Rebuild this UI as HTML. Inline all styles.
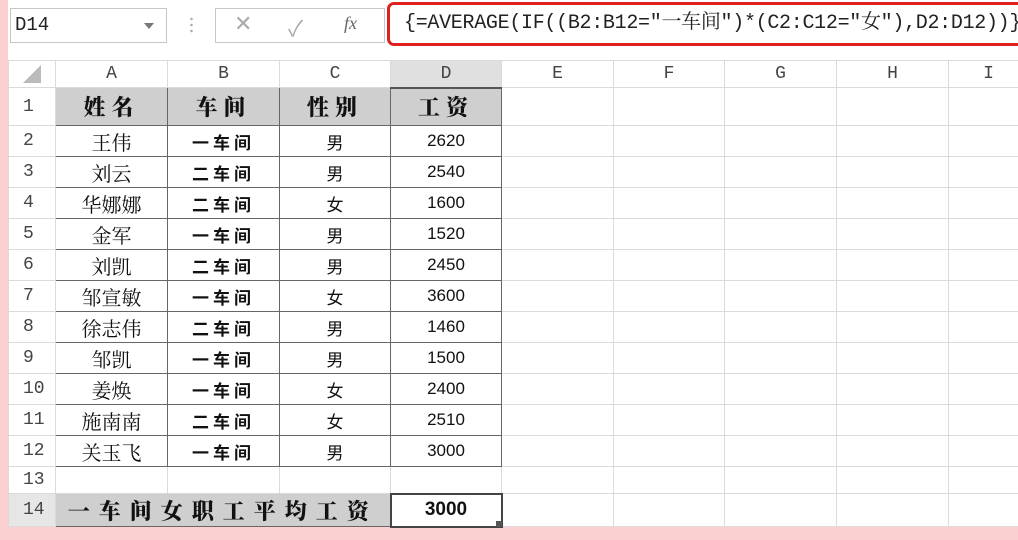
<!DOCTYPE html>
<html><head><meta charset="utf-8"><style>
body{margin:0;width:1018px;height:540px;overflow:hidden;background:#fbd0d0;position:relative;font-family:"Liberation Sans","Noto Sans CJK SC",sans-serif}
#sheet{position:absolute;left:8px;top:0;width:1010px;height:527px;background:#fff}
.nb{position:absolute;left:10px;top:8px;width:157px;height:35px;border:1px solid #c6c6c6;background:#fff;box-sizing:border-box;font:19px "Liberation Mono","Noto Sans CJK SC",monospace;line-height:33px;padding-left:4px;color:#222}
.nb:after{content:"";position:absolute;right:12px;top:14px;border:5px solid transparent;border-top:6px solid #777}
.dots{position:absolute;left:190px;top:16px;width:3px;height:18px;background:radial-gradient(circle,#aaa 1px,transparent 1.5px) 0 0/3px 6px}
.btns{position:absolute;left:215px;top:8px;width:170px;height:35px;border:1px solid #c6c6c6;box-sizing:border-box;color:#aaa;font-size:22px}
.red{position:absolute;left:387px;top:2px;width:640px;height:44px;border:3px solid #e02020;border-radius:7px;box-sizing:border-box;background:#fff;font:20px "Liberation Mono","Noto Serif CJK SC",monospace;line-height:38px;padding-left:14px;white-space:nowrap;color:#222;overflow:hidden;letter-spacing:-0.3px}
table{position:absolute;left:8px;top:60px;border-collapse:collapse;table-layout:fixed;width:1020px}
td{border:1px solid #dadada;padding:0;text-align:center;font-size:17px;color:#111;white-space:nowrap;overflow:hidden}
td.h{background:#fff;font:18px "Liberation Mono","Noto Serif CJK SC",monospace;color:#444}
td.r{text-align:left;padding-left:14px;font:18px "Liberation Mono",monospace;color:#444}
.d{border:1px solid #666}
.g{background:#cfcfcf;font-family:"Noto Serif CJK SC",serif;font-weight:900;font-size:22px;letter-spacing:6px}
.n{font-family:"Noto Serif CJK SC",serif;font-size:20px}
.w{font-family:"Noto Sans CJK SC",sans-serif;font-weight:700;font-size:17px;letter-spacing:4px}
</style></head><body>
<div id="sheet"></div>
<div class="nb">D14</div>
<div class="dots"></div>
<div class="btns"><span style="position:absolute;left:18px;top:2px">✕</span><span style="position:absolute;left:72px;top:2px">✓</span><span style="position:absolute;left:128px;top:4px;font:italic 18px 'Liberation Serif',serif;color:#666">fx</span></div>
<div class="red">{=AVERAGE(IF((B2:B12="一车间")*(C2:C12="女"),D2:D12))}</div>
<table>
<colgroup><col style="width:47px"><col style="width:112px"><col style="width:112px"><col style="width:111px"><col style="width:111px"><col style="width:112px"><col style="width:111px"><col style="width:112px"><col style="width:112px"><col style="width:80px"></colgroup>
<tr style="height:26px"><td class="h" style="color:#bbb">◢</td><td class="h">A</td><td class="h">B</td><td class="h">C</td><td class="h" style="background:#e0e0e0;border-bottom:2px solid #555">D</td><td class="h">E</td><td class="h">F</td><td class="h">G</td><td class="h">H</td><td class="h">I</td></tr>
<tr style="height:38px"><td class="r">1</td><td class="d g">姓名</td><td class="d g">车间</td><td class="d g">性别</td><td class="d g">工资</td><td></td><td></td><td></td><td></td><td></td></tr>
<tr style="height:31px"><td class="r">2</td><td class="d n">王伟</td><td class="d w">一车间</td><td class="d">男</td><td class="d">2620</td><td></td><td></td><td></td><td></td><td></td></tr>
<tr style="height:31px"><td class="r">3</td><td class="d n">刘云</td><td class="d w">二车间</td><td class="d">男</td><td class="d">2540</td><td></td><td></td><td></td><td></td><td></td></tr>
<tr style="height:31px"><td class="r">4</td><td class="d n">华娜娜</td><td class="d w">二车间</td><td class="d">女</td><td class="d">1600</td><td></td><td></td><td></td><td></td><td></td></tr>
<tr style="height:31px"><td class="r">5</td><td class="d n">金军</td><td class="d w">一车间</td><td class="d">男</td><td class="d">1520</td><td></td><td></td><td></td><td></td><td></td></tr>
<tr style="height:31px"><td class="r">6</td><td class="d n">刘凯</td><td class="d w">二车间</td><td class="d">男</td><td class="d">2450</td><td></td><td></td><td></td><td></td><td></td></tr>
<tr style="height:31px"><td class="r">7</td><td class="d n">邹宣敏</td><td class="d w">一车间</td><td class="d">女</td><td class="d">3600</td><td></td><td></td><td></td><td></td><td></td></tr>
<tr style="height:31px"><td class="r">8</td><td class="d n">徐志伟</td><td class="d w">二车间</td><td class="d">男</td><td class="d">1460</td><td></td><td></td><td></td><td></td><td></td></tr>
<tr style="height:31px"><td class="r">9</td><td class="d n">邹凯</td><td class="d w">一车间</td><td class="d">男</td><td class="d">1500</td><td></td><td></td><td></td><td></td><td></td></tr>
<tr style="height:31px"><td class="r">10</td><td class="d n">姜焕</td><td class="d w">一车间</td><td class="d">女</td><td class="d">2400</td><td></td><td></td><td></td><td></td><td></td></tr>
<tr style="height:31px"><td class="r">11</td><td class="d n">施南南</td><td class="d w">二车间</td><td class="d">女</td><td class="d">2510</td><td></td><td></td><td></td><td></td><td></td></tr>
<tr style="height:31px"><td class="r">12</td><td class="d n">关玉飞</td><td class="d w">一车间</td><td class="d">男</td><td class="d">3000</td><td></td><td></td><td></td><td></td><td></td></tr>
<tr style="height:27px"><td class="r">13</td><td></td><td></td><td></td><td></td><td></td><td></td><td></td><td></td><td></td></tr>
<tr style="height:33px"><td class="r" style="background:#e6e6e6">14</td><td colspan="3" class="d g" style="letter-spacing:9px">一车间女职工平均工资</td><td style="border:2px solid #444;font-weight:bold;font-size:19px">3000</td><td></td><td></td><td></td><td></td><td></td></tr>
</table>
<div style="position:absolute;left:496px;top:521px;width:6px;height:6px;background:#555"></div>
</body></html>
